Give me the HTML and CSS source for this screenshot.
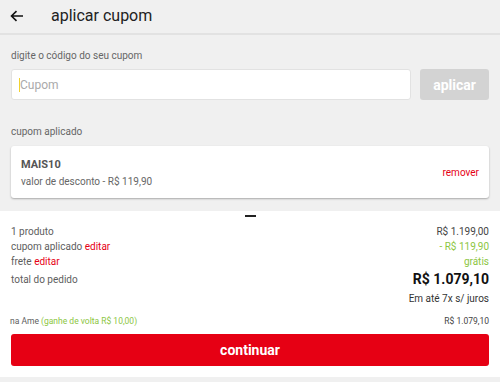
FILE: index.html
```html
<!DOCTYPE html>
<html lang="pt-BR">
<head>
<meta charset="utf-8">
<link rel="stylesheet" href="styles.css">
</head>
<body>
<div class="page">
  <header class="topbar">
    <svg class="back" width="14" height="12" viewBox="0 0 14 12"><path d="M13 6H2M6.5 1.2L1.5 6l5 4.8" fill="none" stroke="#111" stroke-width="1.6"/></svg>
    <span class="title">aplicar cupom</span>
  </header>
  <main class="content">
    <div class="label first">digite o código do seu cupom</div>
    <div class="coupon-row">
      <div class="input"><span class="caret"></span><span class="ph">Cupom</span></div>
      <button class="apply">aplicar</button>
    </div>
    <div class="label second">cupom aplicado</div>
    <div class="card">
      <div class="card-info">
        <div class="code">MAIS10</div>
        <div class="desc">valor de desconto - R$ 119,90</div>
      </div>
      <span class="remove">remover</span>
    </div>
  </main>
  <section class="summary">
    <div class="handle"></div>
    <div class="row first"><span>1 produto</span><span>R$ 1.199,00</span></div>
    <div class="row"><span>cupom aplicado <em>editar</em></span><span class="green">- R$ 119,90</span></div>
    <div class="row"><span>frete <em>editar</em></span><span class="green">grátis</span></div>
    <div class="row total"><span>total do pedido</span><span class="big">R$ 1.079,10</span></div>
    <div class="installments">Em até 7x s/ juros</div>
    <div class="row ame"><span>na Ame <span class="green">(ganhe de volta R$ 10,00)</span></span><span>R$ 1.079,10</span></div>
    <button class="continue">continuar</button>
  </section>
</div>
</body>
</html>
```
FILE: styles.css
```css
* { box-sizing: border-box; }
html, body { margin: 0; padding: 0; }
body {
  background: #f0f0f0;
  font-family: Roboto, "Liberation Sans", sans-serif;
  width: 500px;
  height: 382px;
  overflow: hidden;
}
.topbar {
  height: 35px;
  display: flex;
  align-items: center;
  border-bottom: 2px solid #e2e2e2;
  padding-left: 10px;
  padding-bottom: 2px;
}
.back { margin-right: 27px; }
.title { font-size: 16px; color: #222; }
.content { padding: 0 11px; }
.label { font-size: 10px; color: #666; line-height: 14px; }
.label.first { margin-top: 14px; }
.label.second { margin-top: 25px; }
.coupon-row { display: flex; gap: 9px; margin-top: 6px; }
.input {
  flex: 1;
  height: 31px;
  background: #fff;
  border: 1px solid #e2e2e2;
  border-radius: 3px;
  display: flex;
  align-items: center;
  padding-left: 7px;
}
.caret { width: 1px; height: 14px; background: #f2d230; }
.ph { font-size: 12px; color: #aaa; }
.apply {
  width: 69px;
  height: 31px;
  border: none;
  border-radius: 3px;
  background: #d3d3d3;
  color: #fff;
  font-family: inherit;
  font-weight: bold;
  font-size: 14px;
  padding: 0;
}
.card {
  margin-top: 7px;
  height: 52px;
  background: #fff;
  border-radius: 3px;
  box-shadow: 0 1px 2px rgba(0,0,0,0.3);
  display: flex;
  align-items: center;
  justify-content: space-between;
  padding: 0 10px;
}
.card-info { align-self: flex-start; padding-top: 12px; }
.code { font-size: 11px; font-weight: bold; color: #555; line-height: 13px; }
.desc { font-size: 10px; color: #666; margin-top: 5px; line-height: 12px; }
.remove { font-size: 10px; color: #e60014; margin-top: 1px; }
.summary {
  margin-top: 13px;
  background: #fff;
  height: 166px;
  padding: 4px 11px 0;
}
.handle { width: 11px; height: 2px; background: #222; margin: 0 auto; }
.row {
  display: flex;
  justify-content: space-between;
  align-items: center;
  font-size: 10px;
  color: #5e5e5e;
  line-height: 15px;
}
.row.first { margin-top: 7px; }
.row em { font-style: normal; color: #e60014; }
.row span:last-child { color: #444; }
.row .green, .row span.green:last-child { color: #8cc63f; }
.row.total { line-height: 21px; }
.big { font-size: 14px; font-weight: bold; color: #111 !important; }
.installments { text-align: right; font-size: 10px; color: #333; line-height: 15px; margin-top: 1px; }
.row.ame { margin-top: 9px; font-size: 8.5px; line-height: 12px; margin-left: -1px; }
.row.ame span:last-child { color: #444; }
.row.ame span.green { color: #8cc63f; }
.continue {
  display: block;
  width: 100%;
  height: 32px;
  margin-top: 7px;
  border: none;
  border-radius: 3px;
  background: #e60014;
  color: #fff;
  font-family: inherit;
  font-weight: bold;
  font-size: 14px;
}
```
